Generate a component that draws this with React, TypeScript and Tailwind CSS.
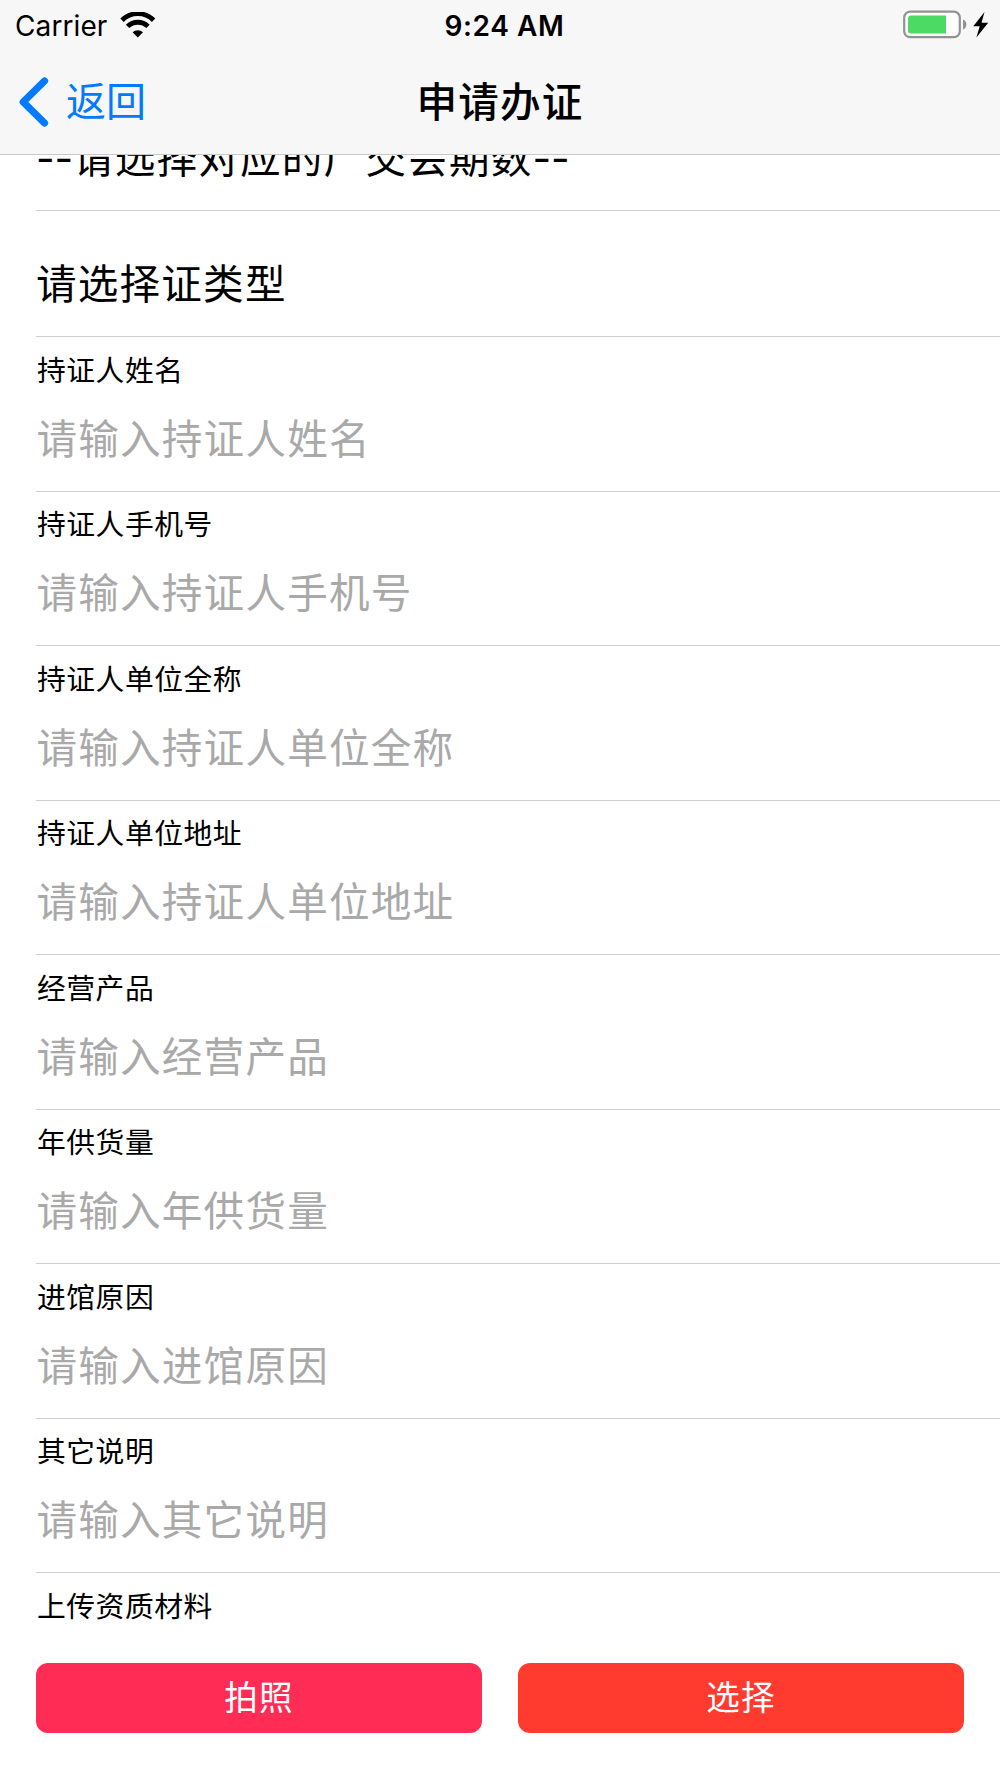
import React from 'react';

interface Field {
  label: string;
  placeholder: string;
}

const fields: Field[] = [
  { label: '持证人姓名', placeholder: '请输入持证人姓名' },
  { label: '持证人手机号', placeholder: '请输入持证人手机号' },
  { label: '持证人单位全称', placeholder: '请输入持证人单位全称' },
  { label: '持证人单位地址', placeholder: '请输入持证人单位地址' },
  { label: '经营产品', placeholder: '请输入经营产品' },
  { label: '年供货量', placeholder: '请输入年供货量' },
  { label: '进馆原因', placeholder: '请输入进馆原因' },
  { label: '其它说明', placeholder: '请输入其它说明' },
];

const WifiIcon = () => (
  <svg className="h-[26px] w-[36px]" viewBox="0 0 36 26">
    <path d="M2 8.2a22.4 22.4 0 0 1 31.6 0" fill="none" stroke="#000" strokeWidth="4.8" />
    <path d="M7.6 14.4a14.6 14.6 0 0 1 20.4 0" fill="none" stroke="#000" strokeWidth="4.8" />
    <path d="M12.6 20.2a7.6 7.6 0 0 1 10.4 0L17.8 25.4z" fill="#000" />
  </svg>
);

const BatteryIcon = () => (
  <svg className="h-[30px] w-[88px]" viewBox="0 0 88 30">
    <rect x="1.2" y="1.6" width="55.6" height="25.6" rx="6" fill="#fdfdfd" stroke="#929292" strokeWidth="2.2" />
    <path d="M8 5.5h35v18H8a3 3 0 0 1-3-3v-12a3 3 0 0 1 3-3z" fill="#4cd964" />
    <path d="M60 9.5a5.4 5.4 0 0 1 0 10z" fill="#929292" />
    <path d="M81.5 2L70.3 16.3h6.4L73.4 27.5 85.2 12.7h-6.7z" fill="#000" />
  </svg>
);

const App: React.FC = () => {
  return (
    <div className="flex h-[1778px] w-[1000px] flex-col overflow-hidden bg-white font-['Inter','Noto_Sans_CJK_SC',sans-serif] text-black">
      <header className="flex h-[155px] shrink-0 flex-col border-b border-[#c9c9c9] bg-[#f7f7f7]">
        {/* Status bar */}
        <div className="grid h-[50px] grid-cols-3 items-center pr-[9px] pl-[15px] text-[28px]">
          <div className="flex items-center gap-[13px]">
            <span className="pt-px tracking-[0.1px]">Carrier</span>
            <WifiIcon />
          </div>
          <span className="pt-px pl-[3px] text-center font-semibold tracking-[0.6px]">9:24 AM</span>
          <div className="flex justify-end">
            <BatteryIcon />
          </div>
        </div>

        {/* Navigation bar */}
        <div className="grid h-[104px] grid-cols-3 items-center">
          <button className="flex items-center gap-[17px] pl-[18px] text-left text-[#007aff]">
            <svg className="h-[52px] w-[31px]" viewBox="0 0 31 52">
              <path d="M26.5 5L5.2 26l21.3 21" fill="none" stroke="currentColor" strokeWidth="7.2" strokeLinecap="round" strokeLinejoin="round" />
            </svg>
            <span className="text-[40px] leading-[56px]">返回</span>
          </button>
          <h1 className="pt-[2px] text-center text-[40.6px] leading-[56px] font-medium tracking-[1.2px]">申请办证</h1>
        </div>
      </header>

      <main className="flex flex-col pl-9">
        {/* Row scrolled halfway under the header */}
        <div className="flex h-[56px] items-end overflow-hidden border-b border-[#d0d0d2] pb-[23px]">
          <span className="shrink-0 text-[40.6px] leading-[56px] tracking-[1.2px]">
            <span className="tracking-[-0.2px]">--</span>请选择对应的广交会期数<span className="tracking-[-0.2px]">--</span>
          </span>
        </div>
        <div className="flex h-[126px] items-end border-b border-[#d0d0d2] pb-[23px]">
          <span className="text-[40.6px] leading-[56px] tracking-[1.2px]">请选择证类型</span>
        </div>

        {fields.map((field) => (
          <div key={field.label} className="flex h-[154.5px] flex-col border-b border-[#d0d0d2] pt-[13.5px]">
            <label className="pl-px text-[28.8px] leading-[40px] tracking-[0.5px]">{field.label}</label>
            <span className="mt-[21px] pl-[0.5px] text-[40.6px] leading-[56px] tracking-[1.2px] text-[#a9a9a9]">{field.placeholder}</span>
          </div>
        ))}

        <div className="flex flex-col pt-[14px] pr-9">
          <label className="pl-px text-[28.8px] leading-[40px] tracking-[0.5px]">上传资质材料</label>
          <div className="mt-[36px] grid grid-cols-2 gap-9 text-[33.6px] tracking-[1.2px] text-white">
            <button className="h-[70px] rounded-xl bg-[#ff2d55]">拍照</button>
            <button className="h-[70px] rounded-xl bg-[#ff3b30]">选择</button>
          </div>
        </div>
      </main>
    </div>
  );
};

export default App;
